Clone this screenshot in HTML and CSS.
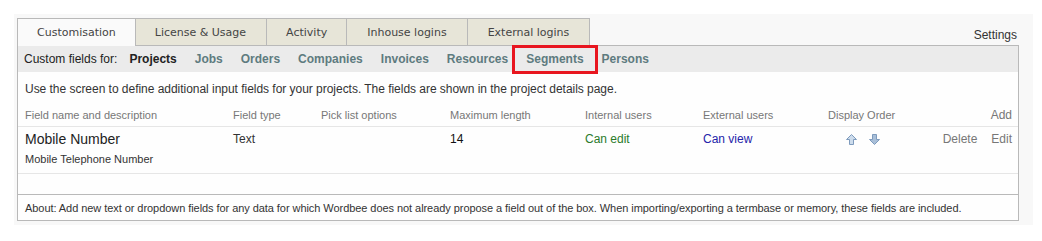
FILE: index.html
```html
<!DOCTYPE html>
<html>
<head>
<meta charset="utf-8">
<link rel="stylesheet" href="styles.css">
</head>
<body>
<div class="page">
  <div class="tabrow">
    <div class="tabs">
      <div class="tab active">Customisation</div>
      <div class="tab">License &amp; Usage</div>
      <div class="tab">Activity</div>
      <div class="tab">Inhouse logins</div>
      <div class="tab">External logins</div>
    </div>
    <div class="settings">Settings</div>
  </div>
  <div class="panel">
    <div class="subnav">
      <span class="label">Custom fields for:</span>
      <span class="item current">Projects</span>
      <span class="item">Jobs</span>
      <span class="item">Orders</span>
      <span class="item">Companies</span>
      <span class="item">Invoices</span>
      <span class="item">Resources</span>
      <span class="item marked">Segments</span>
      <span class="item">Persons</span>
    </div>
    <div class="content">
      <p class="intro">Use the screen to define additional input fields for your projects. The fields are shown in the project details page.</p>
      <div class="grid head">
        <div>Field name and description</div>
        <div>Field type</div>
        <div>Pick list options</div>
        <div>Maximum length</div>
        <div>Internal users</div>
        <div>External users</div>
        <div>Display Order</div>
        <div class="right">Add</div>
      </div>
      <div class="grid row">
        <div>
          <div class="fname">Mobile Number</div>
          <div class="fdesc">Mobile Telephone Number</div>
        </div>
        <div>Text</div>
        <div></div>
        <div class="dark">14</div>
        <div class="green">Can edit</div>
        <div class="blue">Can view</div>
        <div class="arrows">
          <svg width="13" height="13" viewBox="0 0 13 13"><path d="M6.5 1.5 L11.5 6.5 H8.5 V11.5 H4.5 V6.5 H1.5 Z" fill="#cddcec" stroke="#7e9bbd" stroke-width="1" stroke-linejoin="round"/></svg>
          <svg width="13" height="13" viewBox="0 0 13 13"><path d="M6.5 11.5 L11.5 6.5 H8.5 V1.5 H4.5 V6.5 H1.5 Z" fill="#a9bfd8" stroke="#7e9bbd" stroke-width="1" stroke-linejoin="round"/></svg>
        </div>
        <div class="right actions"><span>Delete</span><span>Edit</span></div>
      </div>
      <div class="spacer"></div>
      <div class="about">About: Add new text or dropdown fields for any data for which Wordbee does not already propose a field out of the box. When importing/exporting a termbase or memory, these fields are included.</div>
    </div>
  </div>
</div>
</body>
</html>
```

FILE: styles.css
```css
html, body {
  margin: 0;
  padding: 0;
  background: #ffffff;
}
body {
  padding: 14px 9px 16px 14px;
  font-family: "Liberation Sans", Arial, sans-serif;
  color: #333;
}
.page {
  background: #f8f8f8;
  padding: 4px 14px 4px 3px;
}
.tabrow {
  display: flex;
  justify-content: space-between;
  align-items: flex-end;
  margin-bottom: -1px;
  position: relative;
  z-index: 1;
}
.tabs {
  display: flex;
}
.tab {
  font-family: "DejaVu Sans", Verdana, sans-serif;
  font-size: 11px;
  color: #444;
  height: 26px;
  line-height: 27px;
  padding: 0 19px;
  background: #e7e5d8;
  border: 1px solid #b9b9b9;
  border-bottom: none;
  border-left: none;
}
.tab:first-child {
  border-left: 1px solid #b9b9b9;
}
.tab.active {
  background: #fafafa;
  height: 27px;
}
.tab:nth-child(2) { padding: 0 20px 0 19px; }
.tab:nth-child(3) { padding: 0 19px; }
.tab:nth-child(4) { padding: 0 20px 0 20px; }
.tab:nth-child(5) { padding: 0 20px 0 20px; }
.settings {
  font-size: 12px;
  color: #333;
  padding: 0 2px 4px 0;
}
.panel {
  border: 1px solid #b9b9b9;
  background: #fefefe;
}
.subnav {
  background: #ebebeb;
  height: 26px;
  display: flex;
  align-items: center;
  padding-left: 6px;
  font-size: 12px;
}
.subnav .label {
  color: #222;
  margin-right: 3px;
}
.subnav .item {
  font-weight: bold;
  color: #5e7b7f;
  padding: 2px 9px;
  line-height: 15px;
}
.subnav .item.current {
  color: #222;
}
.subnav .item.marked {
  outline: 3px solid #e8161f;
  outline-offset: 2px;
}
.content {
  font-size: 12px;
}
.intro {
  margin: 0;
  padding: 9px 7px 0;
  line-height: 16px;
  color: #333;
  letter-spacing: -0.03px;
}
.grid {
  display: grid;
  grid-template-columns: 208px 88px 129px 135px 118px 125px 114px 1fr;
  padding: 0 6px 0 7px;
}
.head {
  font-size: 11px;
  color: #777;
  line-height: 14px;
  padding-top: 11px;
  padding-bottom: 4px;
  border-bottom: 1px solid #e6e6e6;
}
.head .right {
  font-size: 12px;
}
.right {
  text-align: right;
}
.row {
  padding-top: 4px;
  padding-bottom: 7px;
  border-bottom: 1px solid #e6e6e6;
  line-height: 16px;
  color: #333;
}
.fname {
  font-size: 14px;
  color: #222;
  line-height: 16px;
}
.fdesc {
  font-size: 11px;
  line-height: 14px;
  margin-top: 5px;
  color: #333;
}
.dark { color: #111; }
.green { color: #2b7b2b; }
.blue { color: #2424aa; }
.arrows {
  display: flex;
  gap: 10px;
  padding: 2px 0 0 17px;
  align-items: flex-start;
}
.arrows svg { display: block; }
.actions {
  display: flex;
  justify-content: flex-end;
  gap: 14px;
  color: #777;
}
.spacer {
  height: 20px;
}
.about {
  border-top: 1px solid #b9b9b9;
  font-size: 11px;
  line-height: 14px;
  padding: 6px 7px 5px;
  color: #333;
  letter-spacing: -0.06px;
}
```
